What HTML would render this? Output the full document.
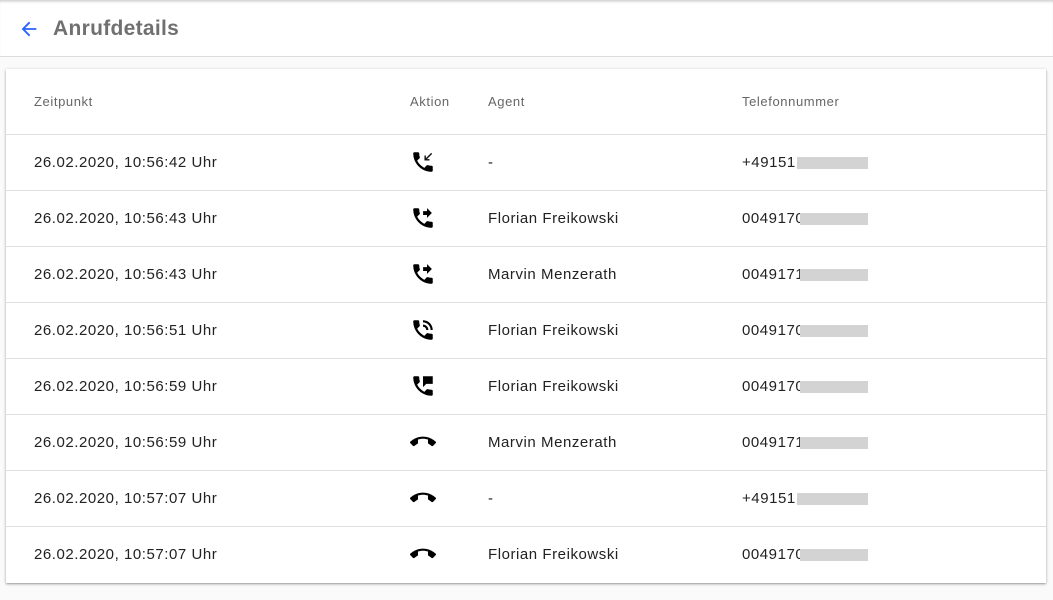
<!DOCTYPE html>
<html><head><meta charset="utf-8"><style>
body{margin:0;width:1053px;height:600px;background:#fafafa;font-family:"Liberation Sans",Roboto,sans-serif;overflow:hidden;position:relative}
.hdr{position:absolute;left:0;top:0;width:1053px;height:56px;background:#fff;border-bottom:1px solid #ddd;box-shadow:inset 0 3px 3px -2px rgba(0,0,0,.25)}
.hdr svg{position:absolute;left:18px;top:18px}
.hdr .t{position:absolute;left:53px;top:17px;font-size:21px;color:#707070;font-weight:bold;letter-spacing:.3px}
.card{position:absolute;left:6px;top:69px;width:1040px;height:514px;background:#fff;box-shadow:0 1px 3px rgba(0,0,0,.3),0 1px 1px rgba(0,0,0,.14)}
.row{position:absolute;left:0;width:1040px;height:56px;border-top:1px solid #e0e0e0;font-size:15px;color:#222;letter-spacing:.55px}
.row span,.th span{position:absolute;top:19px}
.th{position:absolute;left:0;top:0;width:1040px;height:65px;font-size:13px;color:#666;letter-spacing:.6px}
.th span{top:25px}
.c1{left:28px}.c2{left:404px}.c3{left:482px}.c4{left:736px}
.row svg{position:absolute;left:404px;top:14px}
.red{position:absolute;top:22px;height:12px;background:#d3d3d3;width:68px;left:794px}
.red.p{left:791px;width:71px}
</style></head><body>
<div class="hdr"><svg width="22" height="22" viewBox="0 0 24 24"><path d="M20 11H7.83l5.59-5.59L12 4l-8 8 8 8 1.41-1.41L7.83 13H20v-2z" fill="#2962ff"/></svg><div class="t">Anrufdetails</div></div>
<div class="card">
<div class="th"><span class="c1">Zeitpunkt</span><span class="c2">Aktion</span><span class="c3">Agent</span><span class="c4">Telefonnummer</span></div>
<svg width="0" height="0" style="position:absolute"><defs>
<path id="ph" d="M20 15.5c-1.25 0-2.45-.2-3.57-.57-.35-.11-.74-.03-1.02.24l-2.2 2.2c-2.83-1.44-5.15-3.750-6.59-6.59l2.2-2.21c.28-.26.36-.65.25-1C8.7 6.45 8.5 5.25 8.5 4c0-.55-.45-1-1-1H4c-.55 0-1 .45-1 1 0 9.39 7.61 17 17 17 .55 0 1-.45 1-1v-3.5c0-.55-.45-1-1-1z"/>
<path id="he" d="M12 9c-1.6 0-3.15.25-4.6.72v3.1c0 .39-.23.74-.56.9-.98.49-1.87 1.12-2.66 1.85-.18.18-.43.28-.7.28-.28 0-.53-.11-.71-.29L.29 13.08c-.18-.17-.29-.42-.29-.7 0-.28.11-.53.29-.71C3.34 8.78 7.46 7 12 7s8.66 1.78 11.71 4.67c.18.18.29.43.29.71 0 .28-.11.53-.29.71l-2.48 2.48c-.18.18-.43.29-.71.29-.27 0-.52-.11-.7-.28-.79-.74-1.69-1.36-2.67-1.85-.33-.16-.56-.5-.56-.9v-3.1C15.15 9.250 13.6 9 12 9z"/>
</defs></svg>
<div class="row" style="top:65px"><span class="c1">26.02.2020, 10:56:42 Uhr</span><svg width="26" height="26" viewBox="0 0 24 24"><use href="#ph"/><path d="M20 4L14 10M14 6v4h4" stroke="#111" stroke-width="1.3" fill="none"/></svg><span class="c3">-</span><span class="c4">+49151</span><div class="red p"></div></div>
<div class="row" style="top:121px"><span class="c1">26.02.2020, 10:56:43 Uhr</span><svg width="26" height="26" viewBox="0 0 24 24"><use href="#ph"/><path d="M18 11l5-5-5-5v3h-4v4h4v3z" transform="translate(-.5 2) scale(.9)"/></svg><span class="c3">Florian Freikowski</span><span class="c4">0049170</span><div class="red"></div></div>
<div class="row" style="top:177px"><span class="c1">26.02.2020, 10:56:43 Uhr</span><svg width="26" height="26" viewBox="0 0 24 24"><use href="#ph"/><path d="M18 11l5-5-5-5v3h-4v4h4v3z" transform="translate(-.5 2) scale(.9)"/></svg><span class="c3">Marvin Menzerath</span><span class="c4">0049171</span><div class="red"></div></div>
<div class="row" style="top:233px"><span class="c1">26.02.2020, 10:56:51 Uhr</span><svg width="26" height="26" viewBox="0 0 24 24"><use href="#ph"/><path d="M19 12h2c0-4.97-4.03-9-9-9v2c3.87 0 7 3.13 7 7zm-4 0h2c0-2.76-2.24-5-5-5v2c1.66 0 3 1.34 3 3z"/></svg><span class="c3">Florian Freikowski</span><span class="c4">0049170</span><div class="red"></div></div>
<div class="row" style="top:289px"><span class="c1">26.02.2020, 10:56:59 Uhr</span><svg width="26" height="26" viewBox="0 0 24 24"><use href="#ph"/><path d="M12 3v10l3-3h6V3h-9z"/></svg><span class="c3">Florian Freikowski</span><span class="c4">0049170</span><div class="red"></div></div>
<div class="row" style="top:345px"><span class="c1">26.02.2020, 10:56:59 Uhr</span><svg width="30" height="26" viewBox="0 0 24 24" style="left:402px"><use href="#he"/></svg><span class="c3">Marvin Menzerath</span><span class="c4">0049171</span><div class="red"></div></div>
<div class="row" style="top:401px"><span class="c1">26.02.2020, 10:57:07 Uhr</span><svg width="30" height="26" viewBox="0 0 24 24" style="left:402px"><use href="#he"/></svg><span class="c3">-</span><span class="c4">+49151</span><div class="red p"></div></div>
<div class="row" style="top:457px"><span class="c1">26.02.2020, 10:57:07 Uhr</span><svg width="30" height="26" viewBox="0 0 24 24" style="left:402px"><use href="#he"/></svg><span class="c3">Florian Freikowski</span><span class="c4">0049170</span><div class="red"></div></div>
</div>
</body></html>
